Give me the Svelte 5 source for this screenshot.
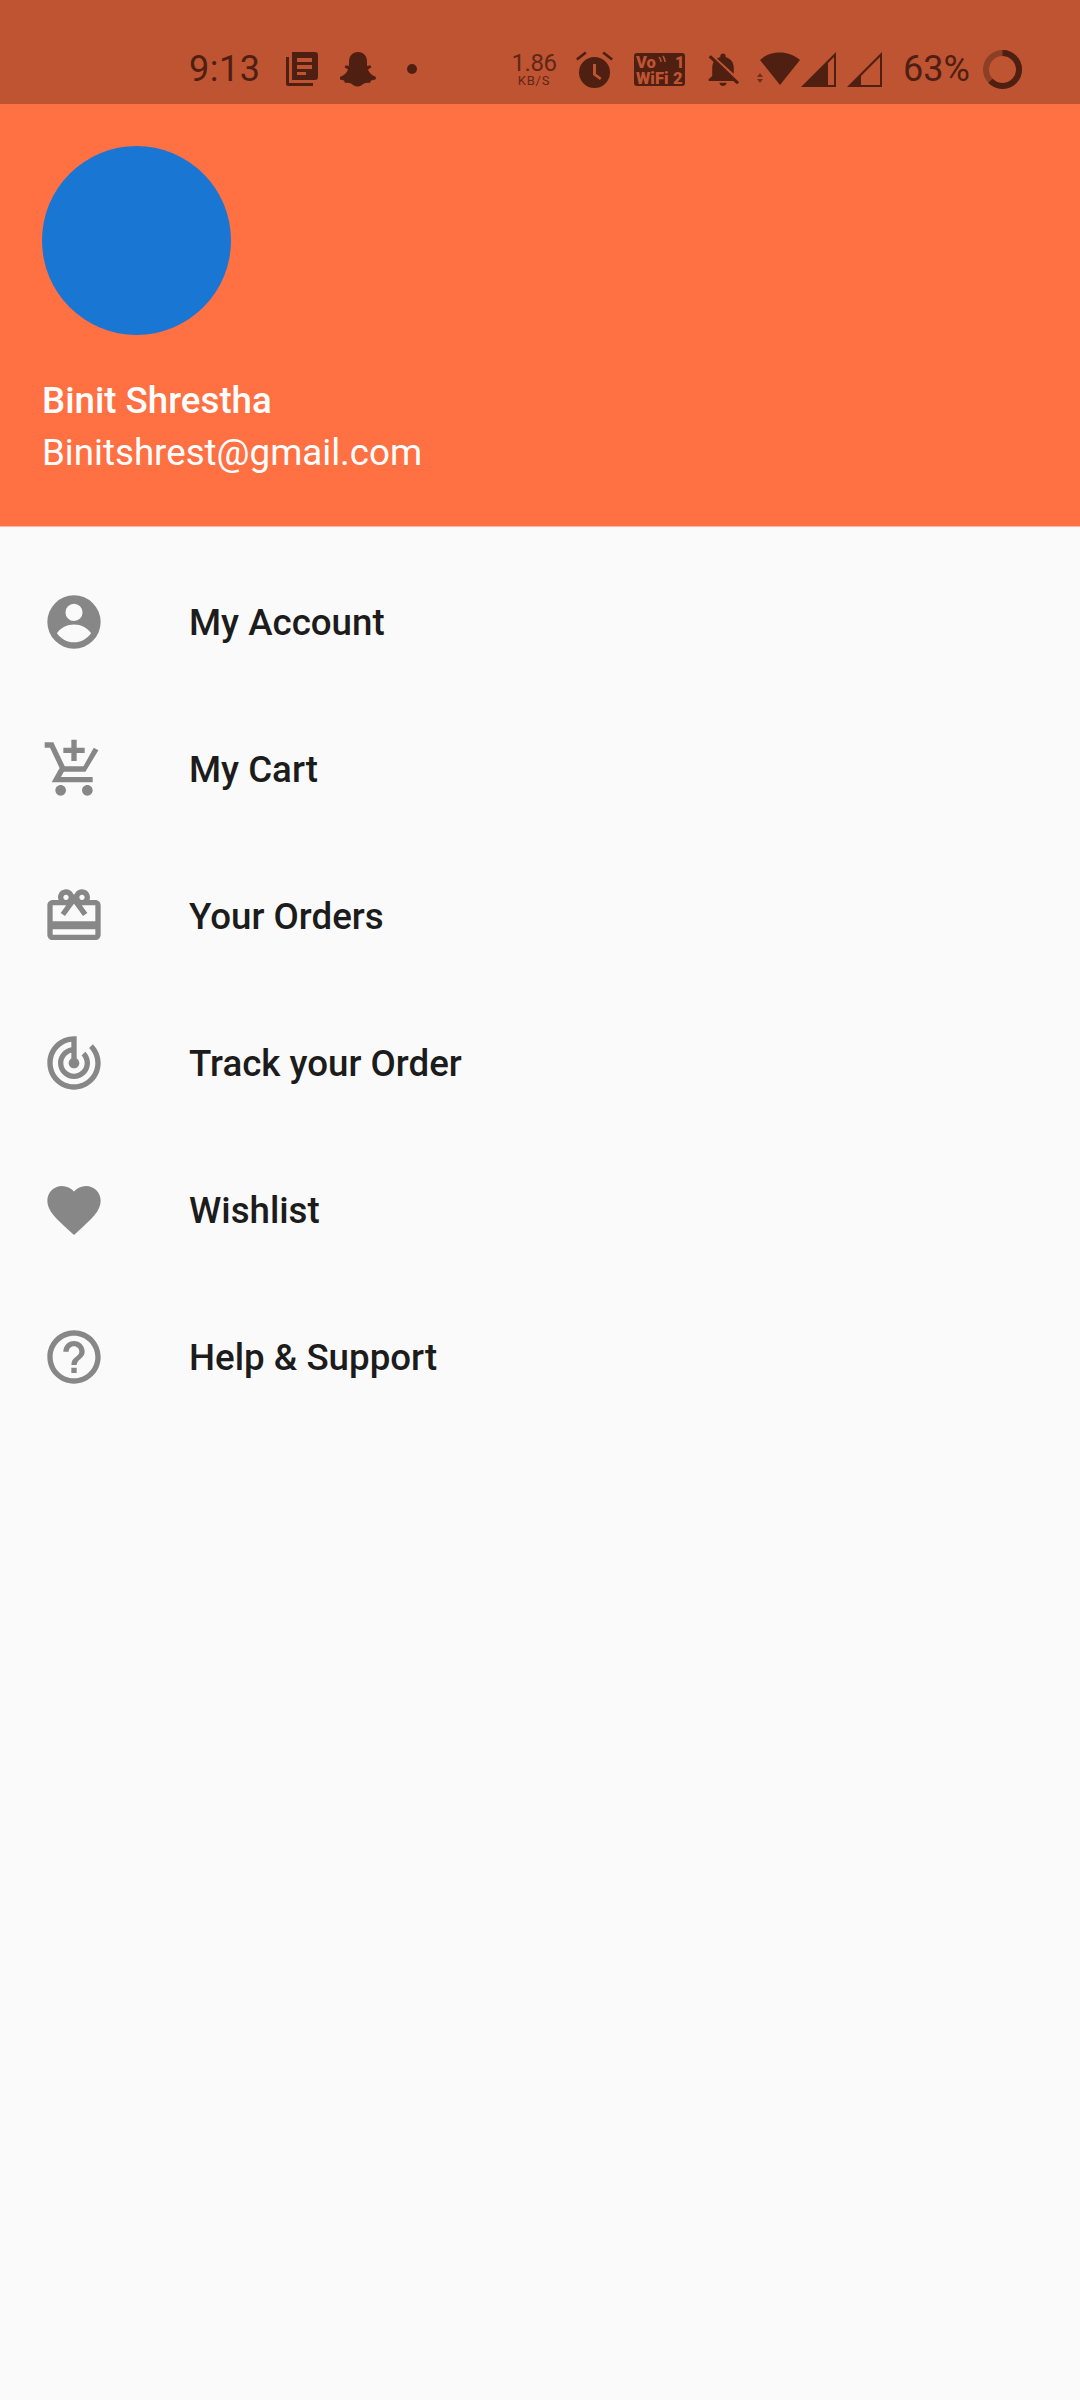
<script>
	const menu = [
		{
			label: 'My Account',
			path: 'M12 2a10 10 0 1 0 0 20 10 10 0 0 0 0-20zm0 3.2a3.2 3.2 0 1 1 0 6.4 3.2 3.2 0 0 1 0-6.4zM5.6 16.2C7 14 9.5 12.9 12 12.9s5 1.1 6.4 3.3c-1.5 2.1-3.8 3.4-6.4 3.4s-4.9-1.3-6.4-3.4z'
		},
		{
			label: 'My Cart',
			path: 'M11 9h2V6h3V4h-3V1h-2v3H8v2h3v3zm-4 9c-1.1 0-1.99.9-1.99 2S5.9 22 7 22s2-.9 2-2-.9-2-2-2zm10 0c-1.1 0-1.99.9-1.99 2s.89 2 1.99 2 2-.9 2-2-.9-2-2-2zM1 2h3.27l.94 2 .95 2 2.24 4.73.13.27h7.02l2.76-5 1.1-2 1.74.96L16.3 13H8.2l-1.1 2H19v2H3.62l2.98-5.41L3 4H1z'
		},
		{
			label: 'Your Orders',
			path: 'M20 6h-2.18c.11-.31.18-.65.18-1 0-1.66-1.34-3-3-3-1.05 0-1.96.54-2.5 1.35l-.5.67-.5-.68C10.96 2.54 10.05 2 9 2 7.34 2 6 3.34 6 5c0 .35.07.69.18 1H4c-1.11 0-1.99.89-1.99 2L2 19c0 1.11.89 2 2 2h16c1.11 0 2-.89 2-2V8c0-1.11-.89-2-2-2zm-5-2c.55 0 1 .45 1 1s-.45 1-1 1-1-.45-1-1 .45-1 1-1zM9 4c.55 0 1 .45 1 1s-.45 1-1 1-1-.45-1-1 .45-1 1-1zm11 15H4v-2h16v2zm0-5H4V8h5.08L7 10.83 8.62 12 11 8.76l1-1.36 1 1.36L15.38 12 17 10.83 14.92 8H20v6z'
		},
		{
			label: 'Track your Order',
			path: 'M19.07 4.93l-1.41 1.41C19.1 7.79 20 9.79 20 12c0 4.42-3.58 8-8 8s-8-3.58-8-8c0-4.08 3.05-7.44 7-7.93v2.02C8.16 6.57 6 9.03 6 12c0 3.31 2.69 6 6 6s6-2.69 6-6c0-1.66-.67-3.16-1.76-4.24l-1.41 1.41C15.55 9.9 16 10.9 16 12c0 2.21-1.79 4-4 4s-4-1.79-4-4c0-1.86 1.28-3.41 3-3.86v2.14c-.6.35-1 .98-1 1.72 0 1.1.9 2 2 2s2-.9 2-2c0-.74-.4-1.38-1-1.72V2h-1C6.48 2 2 6.48 2 12s4.48 10 10 10 10-4.48 10-10c0-2.76-1.12-5.26-2.93-7.07z'
		},
		{
			label: 'Wishlist',
			path: 'M12 21.35l-1.45-1.32C5.4 15.36 2 12.28 2 8.5 2 5.42 4.42 3 7.5 3c1.74 0 3.41.81 4.5 2.09C13.09 3.81 14.76 3 16.5 3 19.58 3 22 5.42 22 8.5c0 3.78-3.4 6.86-8.55 11.54L12 21.35z'
		},
		{
			label: 'Help & Support',
			path: 'M11 18h2v-2h-2v2zm1-16C6.48 2 2 6.48 2 12s4.48 10 10 10 10-4.48 10-10S17.52 2 12 2zm0 18c-4.41 0-8-3.59-8-8s3.59-8 8-8 8 3.59 8 8-3.59 8-8 8zm0-14c-2.21 0-4 1.79-4 4h2c0-1.1.9-2 2-2s2 .9 2 2c0 2-3 1.75-3 5h2c0-2.25 3-2.5 3-5 0-2.21-1.79-4-4-4z'
		}
	];
</script>

<div class="page">
	<header class="drawer-head">
		<div class="status">
			<span class="time">9:13</span>
			<svg class="s-news" width="32" height="34" viewBox="0 0 32 34">
				<path fill-rule="evenodd" d="M6 0h23a3 3 0 0 1 3 3v22a3 3 0 0 1-3 3H6zM11 6v4h15V6zm0 7v4h15v-4zm0 7v3h9v-3z" />
				<path d="M0 5h3v26h24v3H2a2 2 0 0 1-2-2z" />
			</svg>
			<svg class="s-snap" width="36" height="35" viewBox="0 0 36 35">
				<path d="M18 0c6 0 9 4.500 9 9.500 0 2 0 3.500.2 4.500l3-.8 1.300 2-3.500 2.300c1 3 3.500 6 8 7.500l-.5 2.500-4.500 1-1 2.500c-2-.3-4-.5-6 .6-2 1.300-3.500 2.900-6.500 2.900s-4.500-1.600-6.500-2.900c-2-1.100-4-.9-6-.6l-1-2.500-4.500-1L0 25c4.500-1.500 7-4.500 8-7.500l-3.500-2.300 1.300-2 3 .8c.2-1 .2-2.500.2-4.500C9 4.500 12 0 18 0z" />
			</svg>
			<span class="s-dot"></span>
			<div class="speed">
				<span class="speed-num">1.86</span>
				<span class="speed-unit">KB/S</span>
			</div>
			<svg class="s-alarm" width="37" height="37" viewBox="0 0 37 37">
				<path fill-rule="evenodd" d="M18.500 6a15.500 15.500 0 1 1 0 31 15.500 15.500 0 0 1 0-31zM17 13v11l7 5 1.500-2.200-5.500-4V13z" />
				<path d="M0 7.500L9 .5l1.700 2-9 7zM37 7.500L28 .5l-1.700 2 9 7z" />
			</svg>
			<svg class="s-vowifi" width="51" height="33" viewBox="0 0 51 33">
				<rect width="51" height="33" rx="3" />
				<text x="2" y="14.500" class="vo">Vo</text>
				<path d="M25 4q2 2 2 5M29 3q2 3 2 6" stroke="#bf5432" stroke-width="1.500" fill="none" />
				<text x="41" y="15" class="vo">1</text>
				<text x="2" y="30.500" class="vo">WiFi</text>
				<text x="39" y="30.500" class="vo">2</text>
			</svg>
			<svg class="s-bell" width="36" height="36" viewBox="2 1 20 21.600" preserveAspectRatio="none">
				<path d="M20 18.690L7.840 6.140 5.270 3.490 4 4.760l2.800 2.800v.01c-.52.99-.8 2.160-.8 3.420v5l-2 2v1h13.730l2 2L21 19.720l-1-1.030zM12 22c1.110 0 2-.89 2-2h-4c0 1.110.89 2 2 2zm6-7.320V11c0-3.080-1.640-5.640-4.500-6.320V4c0-.83-.67-1.500-1.500-1.500s-1.500.67-1.500 1.500v.68c-.15.03-.29.08-.42.12-.1.03-.2.07-.3.11h-.01c-.2.08-.4.17-.59.27-.2.1-.4.2-.57.3L18 14.680z" />
			</svg>
			<svg class="s-wifi" width="44" height="36" viewBox="0 0 44 36">
				<path d="M3 9C9 3.500 16 1.500 23 1.500S36 3.500 43 9L23 34z" />
				<path d="M0 26l3-4 3 4zM0 28h6l-3 4z" opacity=".7" />
			</svg>
			<svg class="s-signal" width="35" height="35" viewBox="0 0 35 35">
				<path fill-rule="evenodd" d="M35 0v35H0zM33 5L27 11V33h6z" />
			</svg>
			<svg class="s-signal s-signal2" width="35" height="35" viewBox="0 0 35 35">
				<path fill-rule="evenodd" d="M35 0v35H0zM33 5L14 24V33h19z" />
			</svg>
			<span class="battery-text">63%</span>
			<svg class="s-ring" width="39" height="39" viewBox="0 0 39 39">
				<circle cx="19.500" cy="19.500" r="16.500" class="ring-track" />
				<circle cx="19.500" cy="19.500" r="16.500" class="ring-level" pathLength="100" stroke-dasharray="63 37" transform="rotate(-90 19.500 19.500)" />
			</svg>
		</div>

		<div class="profile">
			<div class="avatar"></div>
			<p class="name">Binit Shrestha</p>
			<p class="email">Binitshrest@gmail.com</p>
		</div>
	</header>

	<ul class="menu">
		{#each menu as item}
			<li class="menu-item">
				<svg class="menu-icon" width="64" height="64" viewBox="0 0 24 24">
					<path fill-rule="evenodd" d={item.path} />
				</svg>
				<span>{item.label}</span>
			</li>
		{/each}
	</ul>
</div>

<style>
	:global(body) {
		margin: 0;
		background: #fafafa;
	}

	.page {
		width: 1080px;
		height: 2400px;
		background: #fafafa;
		font-family: Roboto, sans-serif;
		overflow: hidden;
	}

	.drawer-head {
		background: #ff7043;
		height: 527px;
		box-sizing: border-box;
		border-bottom: 1px solid #f3b9a4;
	}

	.status {
		height: 104px;
		box-sizing: border-box;
		padding: 34px 0 0 189px;
		background: #bf5432;
		display: flex;
		align-items: center;
		color: #4f2012;
		fill: #4f2012;
	}

	.time {
		font-size: 36px;
		letter-spacing: .5px;
		line-height: 1;
		width: 71px;
		white-space: nowrap;
	}

	.s-news { margin-left: 26px; }
	.s-snap { margin-left: 22px; }

	.s-dot {
		width: 10px;
		height: 10px;
		border-radius: 50%;
		background: #4f2012;
		margin-left: 31px;
	}

	.speed {
		margin-left: 96px;
		width: 42px;
		display: flex;
		flex-direction: column;
		align-items: center;
		line-height: 1;
		opacity: .85;
	}

	.speed-num { font-size: 24px; height: 23px; letter-spacing: -.5px; }
	.speed-unit { font-size: 13px; letter-spacing: .8px; white-space: nowrap; }

	.s-alarm { margin-left: 21px; }
	.s-vowifi { margin-left: 21px; }

	.vo {
		font-family: Roboto, sans-serif;
		font-size: 16.500px;
		font-weight: 900;
		fill: #bf5432;
	}

	.s-bell { margin-left: 20px; }
	.s-wifi { margin-left: 16px; }
	.s-signal { margin-left: 0; }
	.s-signal2 { margin-left: 11px; }

	.battery-text {
		margin-left: 21px;
		font-size: 36px;
		line-height: 1;
		width: 68px;
		white-space: nowrap;
	}

	.s-ring { margin-left: 12px; }

	.ring-track, .ring-level {
		fill: none;
		stroke-width: 6;
	}

	.ring-track { stroke: #8d3f26; }
	.ring-level { stroke: #4f2012; }

	.profile {
		padding: 42px 42px 0;
	}

	.avatar {
		width: 189px;
		height: 189px;
		border-radius: 50%;
		background: #1976d2;
	}

	.name, .email {
		margin: 0;
		color: #fff;
		font-size: 36.7px;
		line-height: 52px;
		white-space: nowrap;
	}

	.name {
		font-weight: 500;
		margin-top: 40px;
	}

	.menu {
		list-style: none;
		margin: 0;
		padding: 21px 0 0;
	}

	.menu-item {
		height: 147px;
		padding-left: 42px;
		display: flex;
		align-items: center;
		gap: 83px;
		font-size: 36.7px;
		font-weight: 500;
		color: #1c1c1c;
	}

	.menu-item span {
		padding-top: 1px;
	}

	.menu-icon {
		fill: rgba(0, 0, 0, .46);
		flex: none;
	}
</style>
